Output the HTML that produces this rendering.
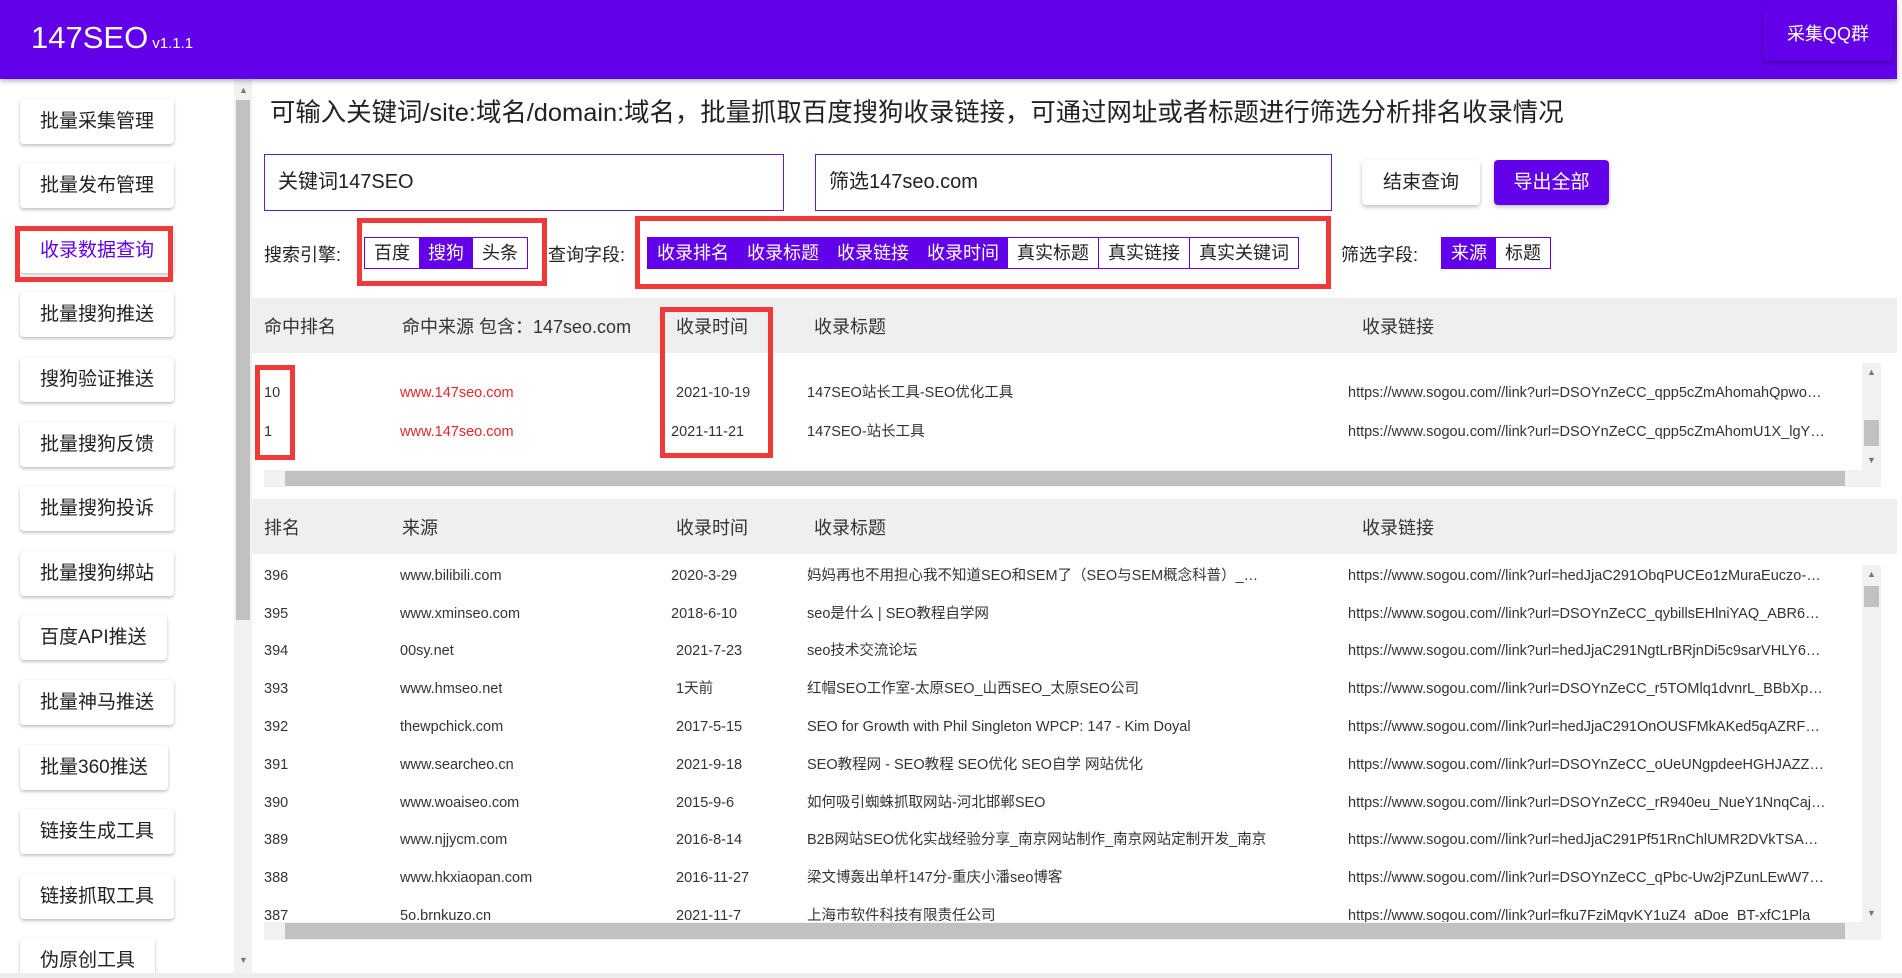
<!DOCTYPE html>
<html><head><meta charset="utf-8">
<style>
*{box-sizing:border-box;margin:0;padding:0}
body{width:1902px;height:978px;overflow:hidden;background:#fff;font-family:"Liberation Sans","Noto Sans CJK SC",sans-serif;color:#222;position:relative}
.abs{position:absolute}
.hdr{left:0;top:0;width:1897px;height:79px;background:#6200ea;box-shadow:0 2px 5px rgba(0,0,0,.3);z-index:2}
.logo{left:31px;top:20px;color:#fff;font-size:31px;white-space:nowrap}
.logo small{font-size:15px;margin-left:4px}
.qq{left:1763px;top:7px;width:130px;height:54px;background:#6200ea;color:#fff;font-size:18px;line-height:54px;text-align:center;box-shadow:0 2px 4px rgba(0,0,0,.3);border-radius:3px}
.sb{left:0;top:79px;width:234px;height:899px;background:#fff;overflow:hidden}
.nb{position:absolute;left:20px;height:45px;line-height:45px;padding:0 20px;font-size:19px;background:#fff;border-radius:4px;box-shadow:0 2px 3px rgba(0,0,0,.22),0 0 2px rgba(0,0,0,.08);white-space:nowrap;color:#222}
.red{position:absolute;border:5px solid #f03a3a;z-index:3}
.vs{left:234px;top:79px;width:18px;height:899px;background:#f1f1f1}
.thumb{background:#c1c1c1;position:absolute}
.tri{position:absolute;font-size:9px;color:#777}
.t{font-size:25.4px;left:270px;top:93px;white-space:nowrap;color:#222}
.inp{top:154px;height:57px;border:1.5px solid #5b21c9;font-size:20px;line-height:54px;padding-left:13px}
.btn{top:160px;height:45px;line-height:45px;font-size:19px;text-align:center;border-radius:4px;box-shadow:0 2px 4px rgba(0,0,0,.25)}
.lbl{font-size:18px;top:241px}
.seg{top:237px;height:32px;display:flex;border:1px solid #6200ea}
.seg span{display:block;height:30px;line-height:30px;font-size:18px;padding:0 9px;white-space:nowrap;background:#fff;color:#222}
.seg span.on{background:#6200ea;color:#fff}
.seg span.b{border-left:1px solid #6200ea}
.th{left:252px;width:1645px;height:55px;background:#efefef}
.th span,.row span{position:absolute;white-space:nowrap}
.th span{font-size:18px;color:#333;top:15px}
.row{position:absolute;left:252px;width:1610px;height:38px;font-size:14.5px;color:#333}
.row span{top:10px;height:18px;line-height:18px;overflow:hidden}
.lk{width:478px;text-overflow:ellipsis}
.tt{width:465px;text-overflow:ellipsis}
</style></head><body>
<div class="abs hdr"><div class="abs logo">147SEO<small>v1.1.1</small></div><div class="abs qq">采集QQ群</div></div>

<div class="abs sb">
<div class="nb" style="top:20px">批量采集管理</div>
<div class="nb" style="top:84px">批量发布管理</div>
<div class="nb" style="top:149px;color:#6200ea">收录数据查询</div>
<div class="nb" style="top:213px">批量搜狗推送</div>
<div class="nb" style="top:278px">搜狗验证推送</div>
<div class="nb" style="top:343px">批量搜狗反馈</div>
<div class="nb" style="top:407px">批量搜狗投诉</div>
<div class="nb" style="top:472px">批量搜狗绑站</div>
<div class="nb" style="top:536px">百度API推送</div>
<div class="nb" style="top:601px">批量神马推送</div>
<div class="nb" style="top:666px">批量360推送</div>
<div class="nb" style="top:730px">链接生成工具</div>
<div class="nb" style="top:795px">链接抓取工具</div>
<div class="nb" style="top:859px">伪原创工具</div>
</div>
<div class="red" style="left:15px;top:226px;width:158px;height:56px"></div>
<div class="abs vs"><div class="thumb" style="left:2px;top:21px;width:14px;height:520px"></div><div class="tri" style="left:5px;top:6px">▲</div><div class="tri" style="left:5px;top:876px">▼</div></div>

<div class="abs t">可输入关键词/site:域名/domain:域名，批量抓取百度搜狗收录链接，可通过网址或者标题进行筛选分析排名收录情况</div>

<div class="abs inp" style="left:264px;width:520px">关键词147SEO</div>
<div class="abs inp" style="left:815px;width:517px">筛选147seo.com</div>
<div class="abs btn" style="left:1362px;width:118px;background:#fff;color:#222">结束查询</div>
<div class="abs btn" style="left:1494px;width:115px;background:#6200ea;color:#fff">导出全部</div>

<div class="abs lbl" style="left:264px">搜索引擎:</div>
<div class="abs seg" style="left:364px"><span>百度</span><span class="on">搜狗</span><span>头条</span></div>
<div class="red" style="left:357px;top:218px;width:190px;height:68px"></div>
<div class="abs lbl" style="left:548px">查询字段:</div>
<div class="abs seg" style="left:647px"><span class="on">收录排名</span><span class="on">收录标题</span><span class="on">收录链接</span><span class="on">收录时间</span><span>真实标题</span><span class="b">真实链接</span><span class="b">真实关键词</span></div>
<div class="red" style="left:635px;top:216px;width:696px;height:73px"></div>
<div class="abs lbl" style="left:1341px">筛选字段:</div>
<div class="abs seg" style="left:1441px"><span class="on">来源</span><span>标题</span></div>

<!-- table 1 -->
<div class="abs th" style="top:298px"><span style="left:12px">命中排名</span><span style="left:150px">命中来源 包含：147seo.com</span><span style="left:424px">收录时间</span><span style="left:562px">收录标题</span><span style="left:1110px">收录链接</span></div>
<div class="row" style="top:374px"><span style="left:12px">10</span><span style="left:148px;color:#e8262b">www.147seo.com</span><span style="left:424px">2021-10-19</span><span style="left:555px">147SEO站长工具-SEO优化工具</span><span class="lk" style="left:1096px">https://www.sogou.com//link?url=DSOYnZeCC_qpp5cZmAhomahQpwoccxkzq</span></div>
<div class="row" style="top:413px"><span style="left:12px">1</span><span style="left:148px;color:#e8262b">www.147seo.com</span><span style="left:419px">2021-11-21</span><span style="left:555px">147SEO-站长工具</span><span class="lk" style="left:1096px">https://www.sogou.com//link?url=DSOYnZeCC_qpp5cZmAhomU1X_lgYf5abcd</span></div>
<div class="abs" style="left:1862px;top:363px;width:19px;height:107px;background:#f1f1f1"><div class="thumb" style="left:2px;top:57px;width:15px;height:26px"></div><div class="tri" style="left:5px;top:4px">▲</div><div class="tri" style="left:5px;top:92px">▼</div></div>
<div class="abs" style="left:264px;top:470px;width:1617px;height:17px;background:#f1f1f1"><div class="thumb" style="left:21px;top:1px;width:1560px;height:15px"></div></div>
<div class="red" style="left:255px;top:365px;width:40px;height:95px"></div>
<div class="red" style="left:660px;top:307px;width:113px;height:151px"></div>

<!-- table 2 -->
<div class="abs th" style="top:499px"><span style="left:12px">排名</span><span style="left:150px">来源</span><span style="left:424px">收录时间</span><span style="left:562px">收录标题</span><span style="left:1110px">收录链接</span></div>
<div class="abs" style="left:252px;top:556px;width:1610px;height:366px;overflow:hidden">
<div style="position:relative;top:-556px;left:-252px">
<div class="row" style="top:557px"><span style="left:12px">396</span><span style="left:148px">www.bilibili.com</span><span style="left:419px">2020-3-29</span><span class="tt" style="left:555px">妈妈再也不用担心我不知道SEO和SEM了（SEO与SEM概念科普）_哔哩哔哩</span><span class="lk" style="left:1096px">https://www.sogou.com//link?url=hedJjaC291ObqPUCEo1zMuraEuczo-4WxYz</span></div>
<div class="row" style="top:595px"><span style="left:12px">395</span><span style="left:148px">www.xminseo.com</span><span style="left:419px">2018-6-10</span><span class="tt" style="left:555px">seo是什么 | SEO教程自学网</span><span class="lk" style="left:1096px">https://www.sogou.com//link?url=DSOYnZeCC_qybillsEHlniYAQ_ABR64lijxyz</span></div>
<div class="row" style="top:632px"><span style="left:12px">394</span><span style="left:148px">00sy.net</span><span style="left:424px">2021-7-23</span><span class="tt" style="left:555px">seo技术交流论坛</span><span class="lk" style="left:1096px">https://www.sogou.com//link?url=hedJjaC291NgtLrBRjnDi5c9sarVHLY671abc</span></div>
<div class="row" style="top:670px"><span style="left:12px">393</span><span style="left:148px">www.hmseo.net</span><span style="left:424px">1天前</span><span class="tt" style="left:555px">红帽SEO工作室-太原SEO_山西SEO_太原SEO公司</span><span class="lk" style="left:1096px">https://www.sogou.com//link?url=DSOYnZeCC_r5TOMlq1dvnrL_BBbXp9AM</span></div>
<div class="row" style="top:708px"><span style="left:12px">392</span><span style="left:148px">thewpchick.com</span><span style="left:424px">2017-5-15</span><span class="tt" style="left:555px">SEO for Growth with Phil Singleton WPCP: 147 - Kim Doyal</span><span class="lk" style="left:1096px">https://www.sogou.com//link?url=hedJjaC291OnOUSFMkAKed5qAZRFPlixyz</span></div>
<div class="row" style="top:746px"><span style="left:12px">391</span><span style="left:148px">www.searcheo.cn</span><span style="left:424px">2021-9-18</span><span class="tt" style="left:555px">SEO教程网 - SEO教程 SEO优化 SEO自学 网站优化</span><span class="lk" style="left:1096px">https://www.sogou.com//link?url=DSOYnZeCC_oUeUNgpdeeHGHJAZZNnxyz</span></div>
<div class="row" style="top:784px"><span style="left:12px">390</span><span style="left:148px">www.woaiseo.com</span><span style="left:424px">2015-9-6</span><span class="tt" style="left:555px">如何吸引蜘蛛抓取网站-河北邯郸SEO</span><span class="lk" style="left:1096px">https://www.sogou.com//link?url=DSOYnZeCC_rR940eu_NueY1NnqCajkAxyz</span></div>
<div class="row" style="top:821px"><span style="left:12px">389</span><span style="left:148px">www.njjycm.com</span><span style="left:424px">2016-8-14</span><span class="tt" style="left:555px">B2B网站SEO优化实战经验分享_南京网站制作_南京网站定制开发_南京</span><span class="lk" style="left:1096px">https://www.sogou.com//link?url=hedJjaC291Pf51RnChlUMR2DVkTSA2-tyxyz</span></div>
<div class="row" style="top:859px"><span style="left:12px">388</span><span style="left:148px">www.hkxiaopan.com</span><span style="left:424px">2016-11-27</span><span class="tt" style="left:555px">梁文博轰出单杆147分-重庆小潘seo博客</span><span class="lk" style="left:1096px">https://www.sogou.com//link?url=DSOYnZeCC_qPbc-Uw2jPZunLEwW74uxyz</span></div>
<div class="row" style="top:897px"><span style="left:12px">387</span><span style="left:148px">5o.brnkuzo.cn</span><span style="left:424px">2021-11-7</span><span class="tt" style="left:555px">上海市软件科技有限责任公司</span><span class="lk" style="left:1096px">https://www.sogou.com//link?url=fku7FziMqvKY1uZ4_aDoe_BT-xfC1Pla</span></div>
</div></div>
<div class="abs" style="left:1862px;top:565px;width:19px;height:357px;background:#f1f1f1"><div class="thumb" style="left:2px;top:21px;width:15px;height:21px"></div><div class="tri" style="left:5px;top:4px">▲</div><div class="tri" style="left:5px;top:343px">▼</div></div>
<div class="abs" style="left:264px;top:922px;width:1617px;height:18px;background:#f1f1f1"><div class="thumb" style="left:21px;top:1px;width:1560px;height:16px"></div></div>
<div class="abs" style="left:0;top:973px;width:1902px;height:5px;background:#eee"></div>
</body></html>
